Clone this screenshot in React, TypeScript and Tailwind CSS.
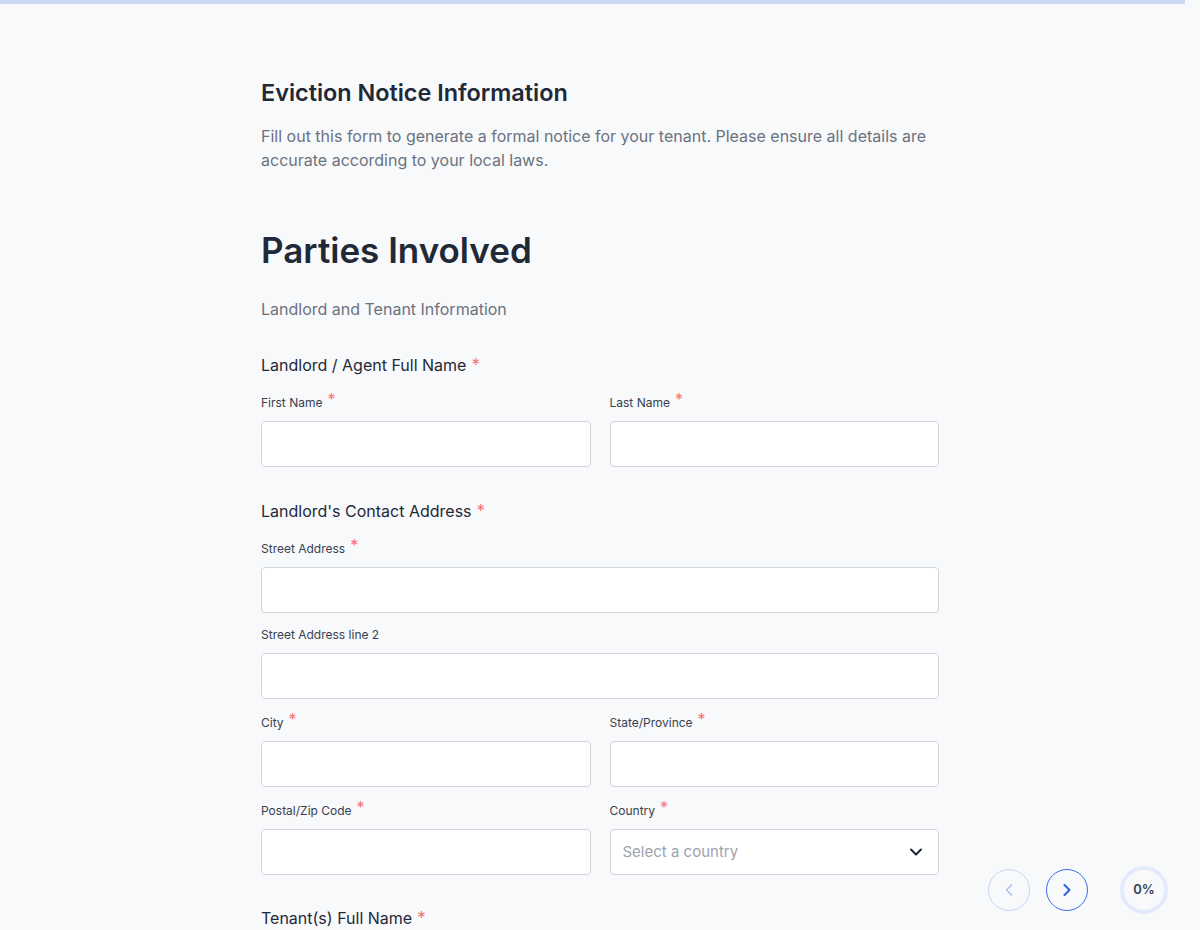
import { ChevronDown, ChevronLeft, ChevronRight } from 'lucide-react';

function Req({ small }: { small?: boolean }) {
  return <span className={small ? 'relative -top-[2px] ml-[5px] text-[16px] leading-none text-[#f87171]' : 'ml-[5px] text-[17px] text-[#f87171]'}>*</span>;
}

function Field({ label, required }: { label: string; required?: boolean }) {
  return (
    <div className="flex flex-col">
      <label className="text-[12px] leading-5 text-[#374151]">
        {label}
        {required && <Req small />}
      </label>
      <input className="mt-2 h-[46px] w-full rounded border border-[#d1d5db] bg-white px-3 text-[15px] outline-none" />
    </div>
  );
}

function SectionLabel({ children }: { children: string }) {
  return (
    <h3 className="text-[16px] leading-[26px] text-[#1f2937]">
      {children}
      <Req />
    </h3>
  );
}

export default function App() {
  return (
    <div className="relative min-h-[930px] overflow-hidden bg-[#f8f9fb]" style={{ fontFamily: 'Inter, "Noto Sans", sans-serif' }}>
      <div className="h-[4px] w-[1185px] bg-[#cbd9f6]" />

      <main className="mx-auto w-[678px] pt-[73px]">
        <h1 className="text-[23.4px] font-semibold leading-8 text-[#1f2937]">Eviction Notice Information</h1>
        <p className="mt-[15px] text-[16px] leading-6 text-[#6b7280]">
          Fill out this form to generate a formal notice for your tenant. Please ensure all details are accurate according to your local laws.
        </p>

        <h2 className="mt-[58px] text-[35px] font-semibold leading-10 text-[#1f2937]">Parties Involved</h2>
        <p className="mt-[27px] text-[16px] leading-6 text-[#6b7280]">Landlord and Tenant Information</p>

        <section className="mt-[31px]">
          <SectionLabel>Landlord / Agent Full Name</SectionLabel>
          <div className="mt-[15px] grid grid-cols-2 gap-x-[19px]">
            <Field label="First Name" required />
            <Field label="Last Name" required />
          </div>
        </section>

        <section className="mt-[31px]">
          <SectionLabel>Landlord's Contact Address</SectionLabel>
          <div className="mt-[15px] flex flex-col gap-[12px]">
            <Field label="Street Address" required />
            <Field label="Street Address line 2" />
            <div className="mt-[2px] grid grid-cols-2 gap-x-[19px] gap-y-[14px]">
              <Field label="City" required />
              <Field label="State/Province" required />
              <Field label="Postal/Zip Code" required />
              <div className="flex flex-col">
                <label className="text-[12px] leading-5 text-[#374151]">
                  Country
                  <Req small />
                </label>
                <button className="mt-2 flex h-[46px] w-full items-center justify-between rounded border border-[#d1d5db] bg-white pl-3 pr-3 text-left text-[15px] text-[#9ca3af]">
                  Select a country
                  <ChevronDown className="h-5 w-5 text-[#1f2937]" strokeWidth={2.5} />
                </button>
              </div>
            </div>
          </div>
        </section>

        <section className="mt-[30px]">
          <SectionLabel>Tenant(s) Full Name</SectionLabel>
        </section>
      </main>

      <div className="absolute left-[988px] top-[866px] flex items-center">
        <button className="flex h-[42px] w-[42px] items-center justify-center rounded-full border border-[#c7d7f7] text-[#a9c0f2]">
          <ChevronLeft className="h-5 w-5" strokeWidth={2} />
        </button>
        <button className="ml-4 flex h-[42px] w-[42px] items-center justify-center rounded-full border-[1.5px] border-[#3b6fe8] text-[#2f63e0]">
          <ChevronRight className="h-5 w-5" strokeWidth={2.5} />
        </button>
        <div className="ml-[32px] flex h-[48px] w-[48px] items-center justify-center rounded-full border-4 border-[#e3ebfa] bg-[#f8f9fb] text-[13px] font-semibold text-[#374151]">
          0%
        </div>
      </div>
    </div>
  );
}
